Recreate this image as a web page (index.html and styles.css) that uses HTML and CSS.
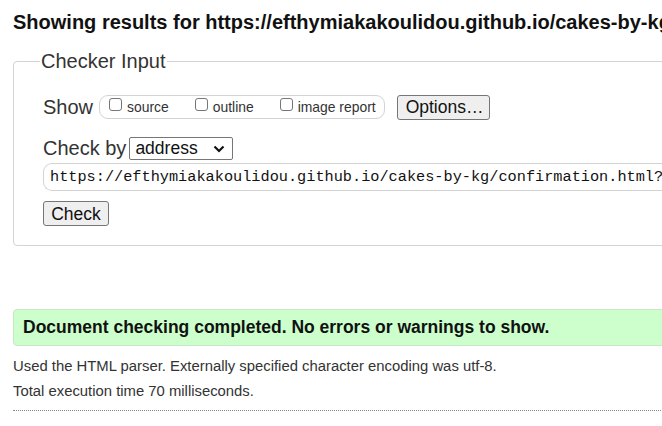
FILE: index.html
```html
<!DOCTYPE html>
<html>
<head>
<meta charset="utf-8">
<link rel="stylesheet" href="styles.css">
</head>
<body>
<div class="page">
  <h2 class="title">Showing results for https://efthymiakakoulidou.github.io/cakes-by-kg/confirmation.html?</h2>
  <fieldset class="checker">
    <legend class="checker-legend">Checker Input</legend>
    <div class="row show-row">
      <span class="row-label">Show</span>
      <span class="show-box">
        <label class="opt"><input type="checkbox" class="cb">source</label>
        <label class="opt"><input type="checkbox" class="cb">outline</label>
        <label class="opt"><input type="checkbox" class="cb">image report</label>
      </span>
      <button class="btn btn-options">Options…</button>
    </div>
    <div class="row by-row">
      <span class="row-label">Check by</span>
      <span class="select">address<svg class="chev" width="12" height="8" viewBox="0 0 12 8"><path d="M1.5 1.5 L6 6 L10.5 1.5" fill="none" stroke="#111" stroke-width="2.2"/></svg></span>
    </div>
    <div class="url">https://efthymiakakoulidou.github.io/cakes-by-kg/confirmation.html?</div>
    <button class="btn btn-check">Check</button>
  </fieldset>
  <div class="success">Document checking completed. No errors or warnings to show.</div>
  <p class="info">Used the HTML parser. Externally specified character encoding was utf-8.</p>
  <p class="info">Total execution time 70 milliseconds.</p>
  <hr class="dots">
</div>
</body>
</html>
```
FILE: styles.css
```css
html, body {
  margin: 0;
  padding: 0;
  overflow: hidden;
  background: #fff;
}
body {
  font-family: "Liberation Sans", Arial, sans-serif;
  color: #222;
}
.page {
  width: 820px;
  padding: 0 0 0 13px;
}
.title {
  margin: 0;
  padding-top: 10px;
  font-size: 20px;
  font-weight: bold;
  line-height: 24px;
  white-space: nowrap;
  color: #111;
}
.checker {
  margin: 15px 0 0 0;
  padding: 0 0 19px 29px;
  border: 1px solid #d3d3d3;
  border-radius: 4px;
  min-width: 0;
}
.checker-legend {
  margin-left: -3px;
  padding: 0 1px;
  font-size: 20px;
  line-height: 24px;
  color: #333;
}
.row {
  display: flex;
  align-items: center;
}
.row-label {
  font-size: 20px;
  color: #333;
}
.show-row {
  margin-top: 21px;
  height: 26px;
}
.show-box {
  display: flex;
  align-items: center;
  margin-left: 6px;
  height: 22px;
  padding: 0 8px 0 9px;
  border: 1px solid #d3d3d3;
  border-radius: 9px;
  font-size: 13.9px;
  color: #333;
}
.opt {
  display: flex;
  align-items: center;
  margin-right: 26px;
}
.opt:last-child {
  margin-right: 0;
}
.cb {
  width: 13px;
  height: 13px;
  margin: -6px 5px 0 0;
  appearance: none;
  border: 1px solid #767676;
  border-radius: 3px;
  background: #fff;
}
.btn {
  font-family: "Liberation Sans", Arial, sans-serif;
  font-size: 17.5px;
  color: #111;
  background: #efefef;
  border: 1px solid #767676;
  border-radius: 3px;
  padding: 0 8px;
  height: 25px;
  line-height: 22px;
}
.btn-options {
  margin-left: 12px;
  width: 93px;
}
.by-row {
  margin-top: 17px;
  height: 23px;
}
.select {
  display: flex;
  align-items: center;
  justify-content: space-between;
  margin-left: 3px;
  width: 90px;
  height: 21px;
  padding: 0 7px 0 5px;
  border: 1px solid #767676;
  border-radius: 2px;
  font-size: 17.5px;
  color: #111;
  background: #fff;
}
.chev {
  display: block;
}
.url {
  margin-top: 3px;
  height: 26px;
  padding-left: 6px;
  border: 1px solid #d3d3d3;
  border-right: none;
  border-radius: 9px 0 0 9px;
  font-family: "Liberation Mono", "DejaVu Sans Mono", monospace;
  font-size: 15.25px;
  line-height: 26px;
  color: #111;
  white-space: nowrap;
  overflow: hidden;
}
.btn-check {
  display: block;
  margin-top: 10px;
  width: 66px;
  padding: 0;
}
.success {
  margin-top: 63px;
  height: 35px;
  padding-left: 9px;
  background: #ccffcc;
  border: 1px solid #c6e8c6;
  border-radius: 4px;
  font-size: 17.5px;
  font-weight: bold;
  line-height: 35px;
  color: #111;
}
.info {
  margin: 0;
  font-size: 14.85px;
  line-height: 25px;
  color: #333;
}
.info:first-of-type {
  margin-top: 8px;
}
.dots {
  margin: 6px 0 0 0;
  border: none;
  border-top: 1px dotted #888;
  height: 0;
}
```
